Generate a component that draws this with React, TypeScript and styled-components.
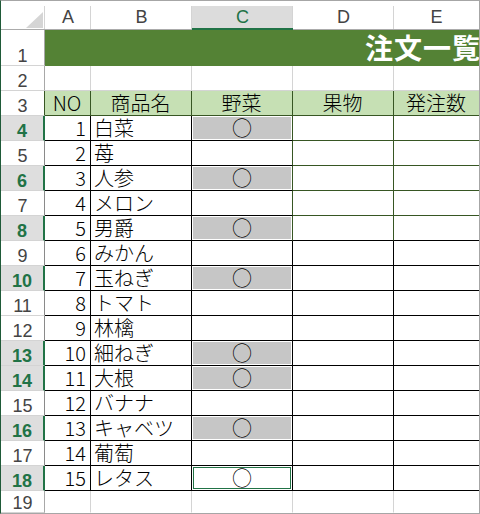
import React from 'react';
import styled, { createGlobalStyle } from 'styled-components';

const GREEN = '#217346';
const DARK = '#375623';
const GRID = '#d4d4d4';
const BLACK = '#000';

const GlobalStyle = createGlobalStyle`
  html, body {
    margin: 0;
    padding: 0;
    background: #fff;
  }
  body {
    font-family: "Noto Sans CJK JP", "Noto Sans", sans-serif;
  }
`;

const Sheet = styled.div`
  width: 480px;
  height: 514px;
  box-sizing: border-box;
  border: 1px solid #a6a6a6;
  border-left-color: #1f5a38;
  display: grid;
  grid-template-columns: 44px 46px 101px 101px 101px 1fr;
  grid-template-rows: 29px 36px 25px 25px repeat(15, 25px) 1fr;
  overflow: hidden;
  background: #fff;
`;

const Corner = styled.div`
  box-sizing: border-box;
  border-bottom: 1px solid #ababab;
  box-shadow: inset -1px 0 0 ${GRID};
  border-top: 5px solid #fff;
  display: flex;
  justify-content: flex-end;
  align-items: flex-end;
  padding: 0 2px 1px 0;
`;

const Triangle = styled.span`
  width: 17px;
  height: 16px;
  background: #d5d5d5;
  clip-path: polygon(100% 0, 100% 100%, 0 100%);
`;

const ColHead = styled.div<{ $active?: boolean; $last?: boolean }>`
  box-sizing: border-box;
  border-top: 5px solid #fff;
  border-bottom: ${p => (p.$active ? `2px solid ${GREEN}` : '1px solid #ababab')};
  background: ${p => (p.$active ? '#dcdcdc' : '#fff')};
  box-shadow: ${p => (p.$last ? 'none' : `inset -1px 0 0 ${GRID}`)};
  display: flex;
  align-items: center;
  justify-content: center;
  font: 18px "Liberation Sans", Arial, sans-serif;
  color: ${p => (p.$active ? GREEN : '#444')};
`;

const RowHead = styled.div<{ $active?: boolean; $edge?: string }>`
  box-sizing: border-box;
  border-bottom: 1px solid ${GRID};
  border-right: ${p => (p.$active ? `2px solid ${GREEN}` : `1px solid ${p.$edge ?? '#a8a8a8'}`)};
  background: ${p => (p.$active ? '#dedede' : '#fff')};
  display: flex;
  align-items: flex-end;
  justify-content: center;
  font: ${p => (p.$active ? 'bold' : 'normal')} 18px "Liberation Sans", Arial, sans-serif;
  line-height: 18px;
  color: ${p => (p.$active ? GREEN : '#444')};
`;

type Align = 'left' | 'right' | 'center';

const Cell = styled.div<{ $right?: string; $bottom?: string; $bg?: string; $align?: Align; $flush?: boolean }>`
  box-sizing: border-box;
  min-width: 0;
  border-right: ${p => (p.$right ? `1px solid ${p.$right}` : 'none')};
  border-bottom: 1px solid ${p => p.$bottom ?? GRID};
  background: ${p => p.$bg ?? '#fff'};
  display: flex;
  align-items: center;
  justify-content: ${p => (p.$align === 'right' ? 'flex-end' : p.$align === 'center' ? 'center' : 'flex-start')};
  padding: ${p => (p.$flush ? '0' : '0 4px 0 3px')};
  font-size: 20px;
  font-weight: 300;
  line-height: 24px;
  color: #000;
  white-space: nowrap;
`;

const Title = styled.div`
  grid-column: 2 / -1;
  box-sizing: border-box;
  background: #548235;
  border-bottom: 1px solid #548235;
  padding-left: 320px;
  display: flex;
  align-items: center;
  font-size: 28px;
  font-weight: bold;
  line-height: 35px;
  letter-spacing: 1px;
  color: #fff;
  white-space: nowrap;
  overflow: hidden;
`;

const Mark = styled.div<{ $state: 'sel' | 'active' }>`
  flex: 1;
  align-self: stretch;
  margin: 1px;
  box-sizing: border-box;
  background: ${p => (p.$state === 'sel' ? '#c6c6c6' : '#fff')};
  border: ${p => (p.$state === 'active' ? `1px solid ${GREEN}` : 'none')};
  display: flex;
  align-items: center;
  justify-content: center;
  line-height: ${p => (p.$state === 'active' ? '20px' : '22px')};
`;

type Item = { no: number; name: string; veg?: 'sel' | 'active' };

const items: Item[] = [
  { no: 1, name: '白菜', veg: 'sel' },
  { no: 2, name: '苺' },
  { no: 3, name: '人参', veg: 'sel' },
  { no: 4, name: 'メロン' },
  { no: 5, name: '男爵', veg: 'sel' },
  { no: 6, name: 'みかん' },
  { no: 7, name: '玉ねぎ', veg: 'sel' },
  { no: 8, name: 'トマト' },
  { no: 9, name: '林檎' },
  { no: 10, name: '細ねぎ', veg: 'sel' },
  { no: 11, name: '大根', veg: 'sel' },
  { no: 12, name: 'バナナ' },
  { no: 13, name: 'キャベツ', veg: 'sel' },
  { no: 14, name: '葡萄' },
  { no: 15, name: 'レタス', veg: 'active' },
];

const columns = ['A', 'B', 'C', 'D', 'E'];
const headings = ['NO', '商品名', '野菜', '果物', '発注数'];

const App: React.FC = () => {
  return (
    <>
      <GlobalStyle />
      <Sheet>
        <Corner>
          <Triangle />
        </Corner>
        {columns.map((c, i) => (
          <ColHead key={c} $active={c === 'C'} $last={i === columns.length - 1}>
            {c}
          </ColHead>
        ))}

        <RowHead>1</RowHead>
        <Title>注文一覧</Title>

        <RowHead>2</RowHead>
        {columns.map((c, i) => (
          <Cell key={c} $right={i < 4 ? GRID : undefined} />
        ))}

        <RowHead $edge={DARK}>3</RowHead>
        {headings.map((h, i) => (
          <Cell key={h} $bg="#c6e0b4" $align="center" $right={i < 4 ? DARK : undefined} $bottom={DARK}>
            {h}
          </Cell>
        ))}

        {items.map((it, i) => {
          const row = i + 4;
          const green = row <= 8;
          const greenBottom = row <= 7;
          return (
            <React.Fragment key={it.no}>
              <RowHead $active={!!it.veg} $edge="#8a8a8a">{row}</RowHead>
              <Cell $align="right" $right={BLACK} $bottom={BLACK}>{it.no}</Cell>
              <Cell $right={BLACK} $bottom={BLACK}>{it.name}</Cell>
              <Cell $flush $right={green ? DARK : BLACK} $bottom={BLACK}>
                {it.veg && <Mark $state={it.veg}>○</Mark>}
              </Cell>
              <Cell $right={green ? DARK : BLACK} $bottom={greenBottom ? DARK : BLACK} />
              <Cell $bottom={greenBottom ? DARK : BLACK} />
            </React.Fragment>
          );
        })}

        <RowHead>19</RowHead>
        {columns.map((c, i) => (
          <Cell key={c} $right={i < 4 ? GRID : undefined} $bottom="transparent" />
        ))}
      </Sheet>
    </>
  );
};

export default App;
